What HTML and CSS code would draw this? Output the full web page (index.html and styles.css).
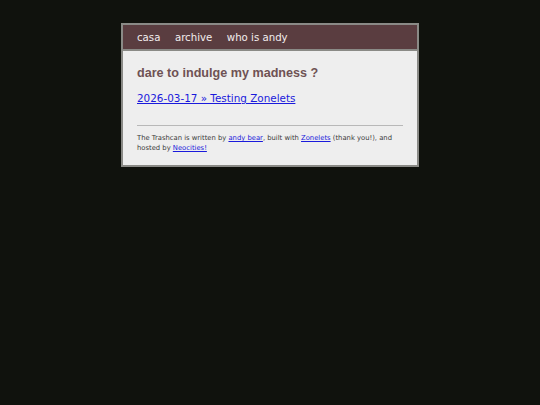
FILE: index.html
```html
<!DOCTYPE html>
<html>
<head>
<meta charset="utf-8">
<link rel="stylesheet" href="styles.css">
</head>
<body>
<div class="box">
  <nav class="nav">
    <a href="#">casa</a>
    <a href="#">archive</a>
    <a href="#">who is andy</a>
  </nav>
  <main class="content">
    <h1 class="title">dare to indulge my madness ?</h1>
    <p class="post"><a href="#">2026-03-17 » Testing Zonelets</a></p>
    <hr class="rule">
    <footer class="foot">The Trashcan is written by <a href="#">andy bear</a>, built with <a href="#">Zonelets</a> (thank you!), and hosted by <a href="#">Neocities!</a></footer>
  </main>
</div>
</body>
</html>
```
FILE: styles.css
```css
html, body {
  margin: 0;
  padding: 0;
  background: #10120d;
}
body {
  padding-top: 23px;
  font-family: "DejaVu Sans", Verdana, sans-serif;
}
.box {
  width: 294px;
  margin: 0 auto;
  border: 2px solid #8a8a86;
  background: #eeeeee;
}
.nav {
  background: #5a3d40;
  border-bottom: 2px solid #8a8a86;
  height: 26px;
  display: flex;
  align-items: center;
  gap: 14.5px;
  padding: 1px 14px 0 14px;
  box-sizing: border-box;
}
.nav a {
  color: #f2eeee;
  text-decoration: none;
  font-size: 10.2px;
}
.content {
  padding: 14px 14px 12px 14px;
}
.title {
  font-family: "Liberation Sans", Arial, sans-serif;
  font-size: 12.6px;
  font-weight: bold;
  color: #6e5254;
  margin: 0 0 10px 0;
  line-height: 16px;
}
.post {
  margin: 0;
  font-size: 10.4px;
  line-height: 14px;
}
.post a {
  color: #1a1adc;
}
.rule {
  border: 0;
  border-top: 1px solid #b8b8b8;
  margin: 20px 0 7px 0;
}
.foot {
  font-size: 6.8px;
  line-height: 10px;
  color: #3a3a3a;
}
.foot a {
  color: #1a1adc;
}
```
